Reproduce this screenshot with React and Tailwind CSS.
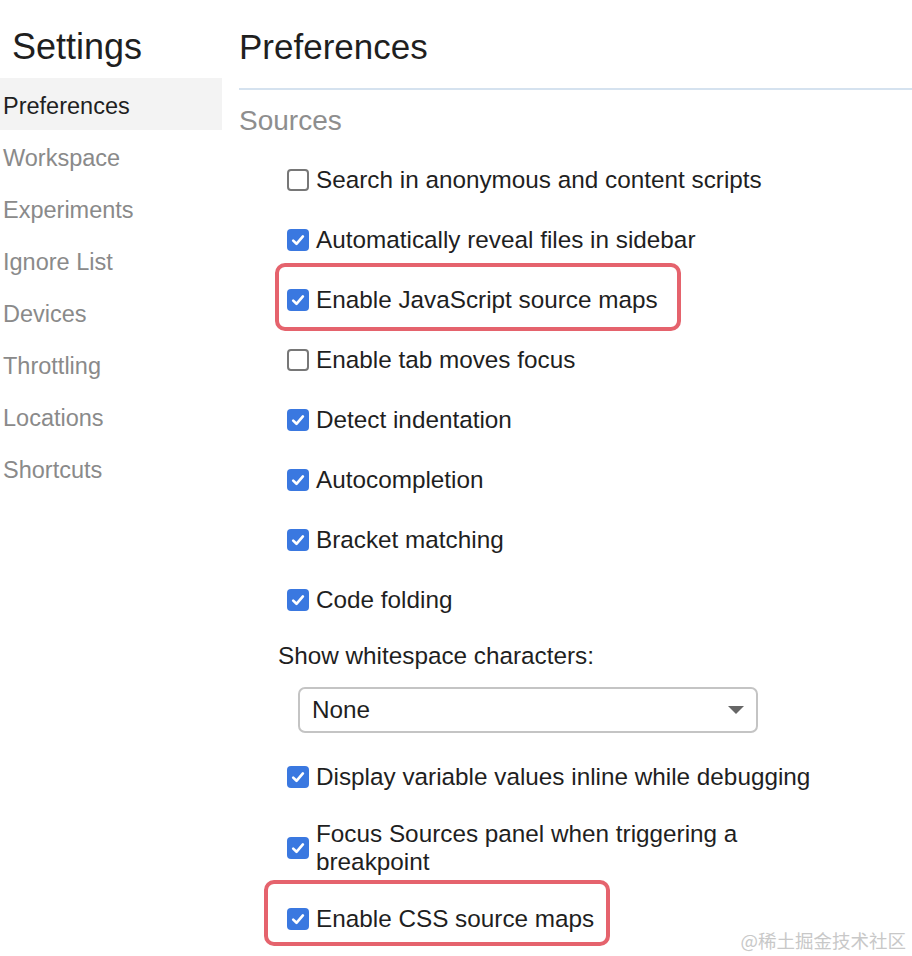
import React from "react";

function Check({ checked }) {
  if (checked) {
    return (
      <span className="flex h-[22px] w-[22px] shrink-0 items-center justify-center rounded-[4px] bg-[#3a78e0]">
        <svg width="16" height="16" viewBox="0 0 16 16">
          <path d="M3.2 8.6 L6.5 11.8 L12.9 4.4" fill="none" stroke="#fff" strokeWidth="2.6" strokeLinecap="round" strokeLinejoin="round" />
        </svg>
      </span>
    );
  }
  return <span className="h-[22px] w-[22px] shrink-0 rounded-[4px] border-2 border-[#777] bg-white" />;
}

function Row({ checked, children, h = "h-[60px]", box }) {
  return (
    <div className={`relative ml-[48px] flex items-center gap-[7px] ${h}`}>
      <Check checked={checked} />
      <span className="text-[24.3px] leading-[28px] text-[#1f1f1f]">{children}</span>
      {box}
    </div>
  );
}

const side = ["Workspace", "Experiments", "Ignore List", "Devices", "Throttling", "Locations", "Shortcuts"];

export default function App() {
  return (
    <div className="relative flex h-[956px] w-[912px] overflow-hidden bg-white font-['Liberation_Sans',Arial,sans-serif]">
      <div className="w-[222px] shrink-0 pt-[24px]">
        <div className="pl-[12px] text-[36px] leading-[46px] text-[#1f1f1f]">Settings</div>
        <div className="mt-[8px] flex h-[52px] items-center bg-[#f3f3f3] pl-[3px] pt-[5px] text-[23.5px] text-[#1f1f1f]">Preferences</div>
        {side.map((s) => (
          <div key={s} className="flex h-[52px] items-center pl-[3px] pt-[5px] text-[23.5px] text-[#8a8a8a]">
            {s}
          </div>
        ))}
      </div>
      <div className="flex-1 pl-[17px] pt-[24px]">
        <div className="text-[35px] leading-[46px] text-[#1f1f1f]">Preferences</div>
        <div className="mt-[18px] border-t-2 border-[#d5e2ef]" />
        <div className="mt-[13px] text-[28px] leading-[36px] text-[#8e8e8e]">Sources</div>
        <div className="mt-[11px]">
          <Row checked={false}>Search in anonymous and content scripts</Row>
          <Row checked>Automatically reveal files in sidebar</Row>
          <Row
            checked
            box={<span className="pointer-events-none absolute left-[-12px] top-[-7px] bottom-[-1px] w-[406px] rounded-[10px] border-[4px] border-[#e5636d]" />}
          >
            Enable JavaScript source maps
          </Row>
          <Row checked={false}>Enable tab moves focus</Row>
          <Row checked>Detect indentation</Row>
          <Row checked>Autocompletion</Row>
          <Row checked>Bracket matching</Row>
          <Row checked>Code folding</Row>
        </div>
        <div className="mt-[12px] ml-[39px] text-[24.3px] leading-[28px] text-[#1f1f1f]">Show whitespace characters:</div>
        <div className="mt-[17px] ml-[59px] flex h-[46px] w-[460px] items-center justify-between rounded-[7px] border-2 border-[#c4c4c4] pl-[12px] pr-[12px]">
          <span className="text-[24.3px] text-[#1f1f1f]">None</span>
          <svg width="16" height="8" viewBox="0 0 16 8">
            <path d="M0 0 L16 0 L8 8 Z" fill="#666" />
          </svg>
        </div>
        <div className="mt-[14px]">
          <Row checked>Display variable values inline while debugging</Row>
          <Row checked h="h-[82px]">
            Focus Sources panel when triggering a
            <br />
            breakpoint
          </Row>
          <Row
            checked
            box={<span className="pointer-events-none absolute left-[-23px] top-[-9px] bottom-[3px] w-[346px] rounded-[10px] border-[4px] border-[#e5636d]" />}
          >
            Enable CSS source maps
          </Row>
        </div>
      </div>
      <div className="absolute right-[6px] top-[928px] font-['Noto_Sans_CJK_SC',sans-serif] text-[18.5px] leading-[24px] text-[#c8c8c8]">
        @稀土掘金技术社区
      </div>
    </div>
  );
}
